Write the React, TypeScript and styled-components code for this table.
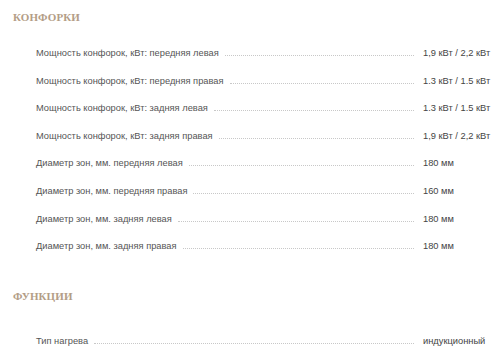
import styled, { createGlobalStyle } from 'styled-components'

const Global = createGlobalStyle`
	html, body { margin: 0; padding: 0; background: #fff; }
	body { font-family: "Liberation Sans", Arial, sans-serif; }
`

const Page = styled.div`
	width: 500px;
	padding: 11px 10px 0 13px;
	box-sizing: border-box;
`

const Section = styled.section<{ $gap?: number }>`
	margin-bottom: ${p => p.$gap ?? 0}px;
`

const Title = styled.h3<{ $space: number }>`
	margin: 0 0 ${p => p.$space}px;
	font-family: "Liberation Serif", "Times New Roman", serif;
	font-weight: bold;
	font-size: 11px;
	letter-spacing: 0.1px;
	line-height: 12px;
	color: #b39d86;
	text-transform: uppercase;
`

const List = styled.dl`
	margin: 0;
	padding-left: 23px;
`

const Row = styled.div`
	display: flex;
	align-items: baseline;
	height: 27.6px;
	font-size: 9.3px;
	line-height: 14px;
`

const Label = styled.dt`
	color: #555;
	white-space: nowrap;
`

const Dots = styled.span`
	flex: 1;
	margin-left: 6px;
	border-bottom: 1px dotted #c8c8c8;
`

const Value = styled.dd`
	margin: 0;
	width: 67px;
	padding-left: 9px;
	color: #444;
	white-space: nowrap;
`

type Spec = [string, string]

const burners: Spec[] = [
	['Мощность конфорок, кВт: передняя левая', '1,9 кВт / 2,2 кВт'],
	['Мощность конфорок, кВт: передняя правая', '1.3 кВт / 1.5 кВт'],
	['Мощность конфорок, кВт: задняя левая', '1.3 кВт / 1.5 кВт'],
	['Мощность конфорок, кВт: задняя правая', '1,9 кВт / 2,2 кВт'],
	['Диаметр зон, мм. передняя левая', '180 мм'],
	['Диаметр зон, мм. передняя правая', '160 мм'],
	['Диаметр зон, мм. задняя левая', '180 мм'],
	['Диаметр зон, мм. задняя правая', '180 мм'],
]

const functions: Spec[] = [
	['Тип нагрева', 'индукционный'],
]

function SpecList({ items }: { items: Spec[] }) {
	return (
		<List>
			{items.map(([label, value]) => (
				<Row key={label}>
					<Label>{label}</Label>
					<Dots />
					<Value>{value}</Value>
				</Row>
			))}
		</List>
	)
}

export default function App() {
	return (
		<>
			<Global />
			<Page>
				<Section $gap={23}>
					<Title $space={23}>Конфорки</Title>
					<SpecList items={burners} />
				</Section>
				<Section>
					<Title $space={32}>Функции</Title>
					<SpecList items={functions} />
				</Section>
			</Page>
		</>
	)
}
